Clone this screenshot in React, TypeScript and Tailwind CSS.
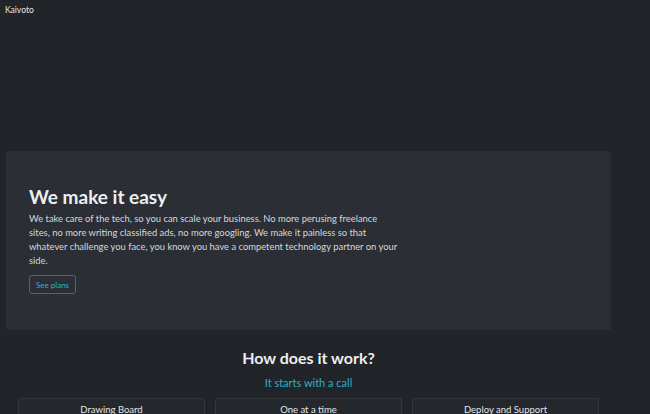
export default function App() {
  const steps = ["Drawing Board", "One at a time", "Deploy and Support"];
  return (
    <div
      className="min-h-[414px] w-[650px] bg-[#212429] text-[#e4e6e8]"
      style={{ fontFamily: 'Lato, "Noto Sans", sans-serif' }}
    >
      <header className="px-[5px] pt-[5px] text-[8.5px] leading-[11px]">Kaivoto</header>

      <main className="ml-[6px] mt-[135px] w-[605px]">
        {/* Hero */}
        <section className="flex h-[179px] flex-col justify-center rounded-[3px] bg-[#2b2f35] px-[23px] pb-[2px]">
          <h1 className="text-[19px] font-bold leading-[24px] text-[#eceef0]">We make it easy</h1>
          <p className="mt-[3px] w-[400px] text-[9.4px] leading-[14px] text-[#d4d7da]">
            We take care of the tech, so you can scale your business. No more perusing freelance
            <br />
            sites, no more writing classified ads, no more googling. We make it painless so that
            <br />
            whatever challenge you face, you know you have a competent technology partner on your
            <br />
            side.
          </p>
          <div className="mt-[2px]">
            <button className="h-[19px] rounded-[3px] border border-[#1f7a8c] px-[6px] text-[8px] text-[#2bb0cc]">
              See plans
            </button>
          </div>
        </section>

        {/* How does it work */}
        <section className="px-[12px] pt-[17px]">
          <h2 className="text-center text-[16px] font-bold leading-[22px] text-[#eceef0]">How does it work?</h2>
          <p className="mt-[7px] text-center text-[11px] leading-[14px] text-[#2bb0cc]">It starts with a call</p>
          <div className="mt-[8px] grid grid-cols-3 gap-[10px]">
            {steps.map((s) => (
              <div key={s} className="h-[16px] overflow-hidden rounded-t-[3px] border border-b-0 border-[#33373d] bg-[#24272c] pt-[5px] text-center text-[9.5px] leading-[12px]">
                {s}
              </div>
            ))}
          </div>
        </section>
      </main>
    </div>
  );
}
